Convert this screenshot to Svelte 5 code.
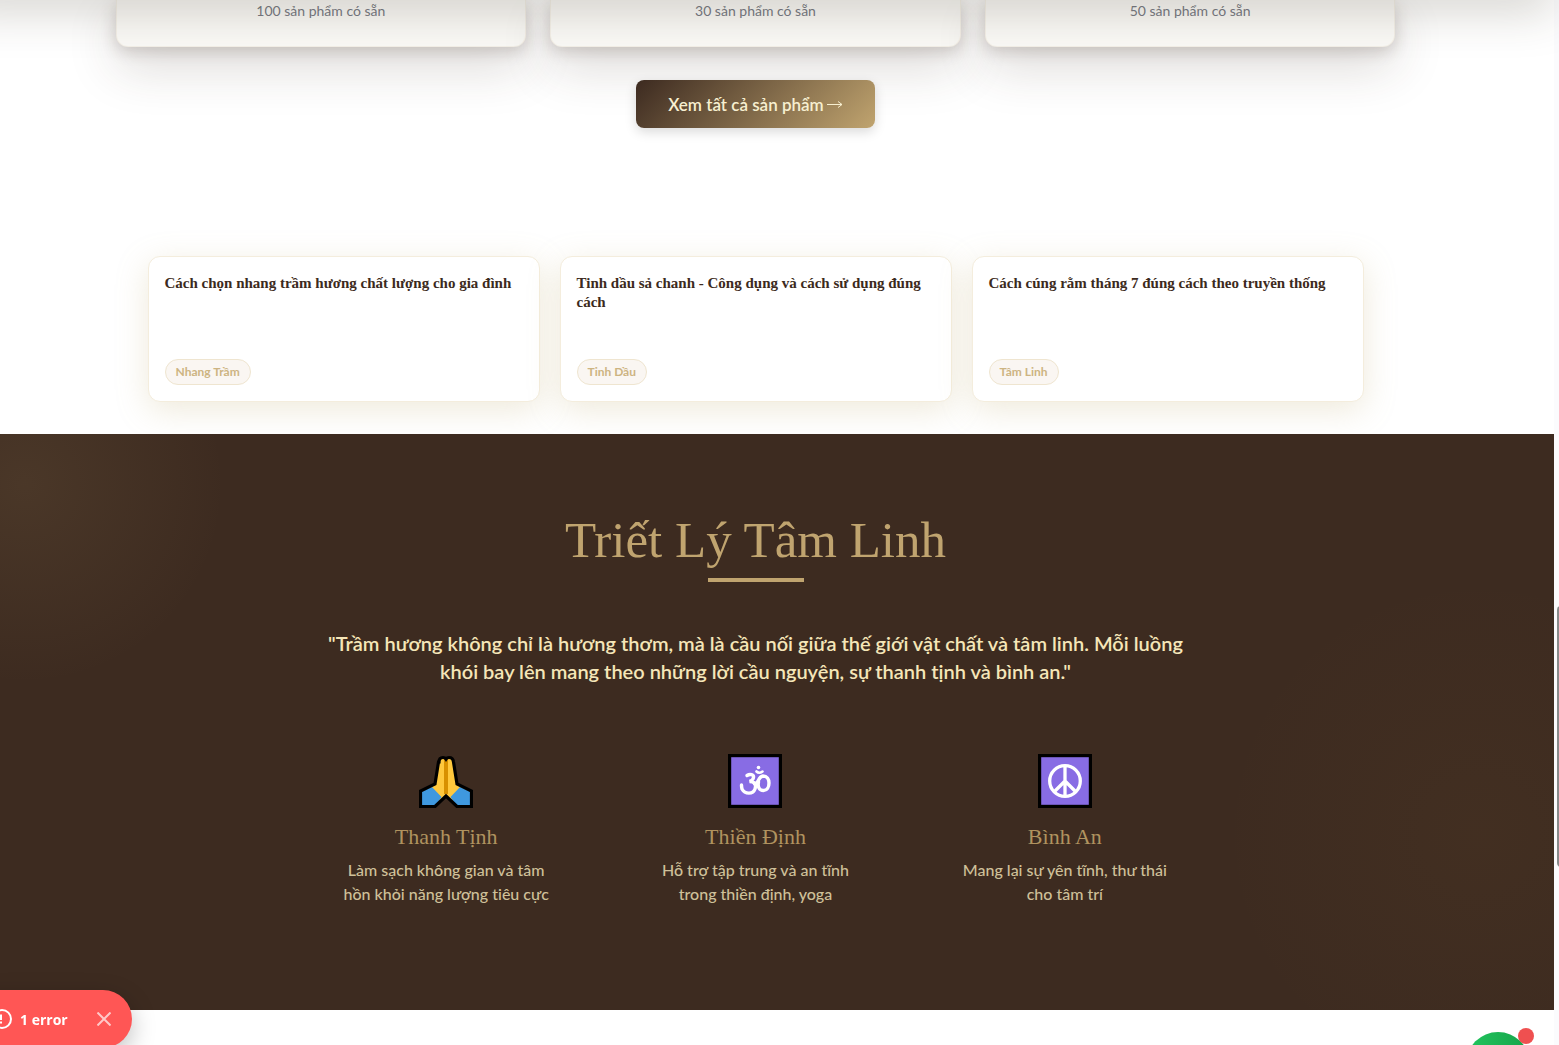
<script>
  const stock = ['100 sản phẩm có sẵn', '30 sản phẩm có sẵn', '50 sản phẩm có sẵn'];
  const posts = [
    { title: 'Cách chọn nhang trầm hương chất lượng cho gia đình', tag: 'Nhang Trầm' },
    { title: 'Tinh dầu sả chanh - Công dụng và cách sử dụng đúng cách', tag: 'Tinh Dầu' },
    { title: 'Cách cúng rằm tháng 7 đúng cách theo truyền thống', tag: 'Tâm Linh' }
  ];
  const values = [
    { icon: 'hands', title: 'Thanh Tịnh', lines: ['Làm sạch không gian và tâm', 'hồn khỏi năng lượng tiêu cực'] },
    { icon: 'om', title: 'Thiền Định', lines: ['Hỗ trợ tập trung và an tĩnh', 'trong thiền định, yoga'] },
    { icon: 'peace', title: 'Bình An', lines: ['Mang lại sự yên tĩnh, thư thái', 'cho tâm trí'] }
  ];
  let showError = $state(true);
</script>

<div class="page">
  <div class="content">
    <div class="nav-shadow"></div>
    <section class="products">
      <div class="stock-grid">
        {#each stock as s}
          <article class="stock-card"><p>{s}</p></article>
        {/each}
      </div>
      <a class="cta" href="#products">Xem tất cả sản phẩm <svg width="16" height="10" viewBox="0 0 16 10" fill="none" stroke="currentColor" aria-hidden="true"><path d="M0 5.500H15M11 2.500L15 5.500L11 8.500" /></svg></a>
    </section>

    <section class="posts">
      <div class="post-grid">
        {#each posts as post}
          <article class="post">
            <h3>{post.title}</h3>
            <span class="tag">{post.tag}</span>
          </article>
        {/each}
      </div>
    </section>

    <section class="philosophy">
      <h2>Triết Lý Tâm Linh</h2>
      <div class="rule"></div>
      <blockquote>"Trầm hương không chỉ là hương thơm, mà là cầu nối giữa thế giới vật chất và tâm linh. Mỗi luồng<br />khói bay lên mang theo những lời cầu nguyện, sự thanh tịnh và bình an."</blockquote>
      <div class="values">
        {#each values as v}
          <div class="value">
            <svg class="emoji" viewBox="0 0 54 54" aria-hidden="true">
              {#if v.icon === 'hands'}
                <path d="M20 8Q20 3.500 24 3.500Q26 3.500 27 4.500Q28 3.500 30 3.500Q34 3.500 34 8L38 30L52.500 37V52.500H38L27 42L16 52.500H1.500V37L16 30Z" fill="#ffc83d" />
                <path d="M1.500 38L13 33L22.500 43L16 52.500H1.500ZM52.500 38L41 33L31.500 43L38 52.500H52.500Z" fill="#3f98df" />
                <path d="M27 4V40" stroke="#d89000" stroke-width="4" />
                <path d="M20 8Q20 3.500 24 3.500Q26 3.500 27 5Q28 3.500 30 3.500Q34 3.500 34.500 8L38 30L52.500 37V52.500H38L27 42L16 52.500H1.500V37L16 30L19.500 8Z" fill="none" stroke="#000" stroke-width="3.200" />
              {:else}
                <rect x="1.600" y="1.600" width="50.800" height="50.800" fill="#886ce4" stroke="#000" stroke-width="3.200" />
                {#if v.icon === 'om'}
                  <g fill="none" stroke="#fff" stroke-width="3.400" stroke-linecap="round">
                    <path d="M19 21.500C22 19.500 26 20.500 25.500 23.500Q25 26.500 21.500 27.500C27 27.500 28.500 31 27 35C25 40.500 17 40.500 14 35Q13.500 33 13.500 31" />
                    <path d="M26.500 29.500C31 30.500 29.500 22.500 35 22C39 22 41 25 41 29C41 33 39 36.500 35.500 36.500C31 36.500 29.500 32.500 30.500 28" />
                    <path d="M28.500 17.500Q31 20 34.500 17.500" stroke-width="2.600" />
                  </g>
                  <circle cx="30.500" cy="13.500" r="1.800" fill="#fff" />
                {:else}
                  <g fill="none" stroke="#fff" stroke-width="3.300">
                    <circle cx="27" cy="27" r="15.300" />
                    <path d="M27 12V42M27 27L16.500 37.500M27 27L37.500 37.500" />
                  </g>
                {/if}
              {/if}
            </svg>
            <h3>{v.title}</h3>
            <p>{v.lines[0]}<br />{v.lines[1]}</p>
          </div>
        {/each}
      </div>
    </section>
  </div>
  <div class="gutter"><div class="thumb"></div></div>
</div>

{#if showError}
  <div class="toast" role="alert">
    <svg width="20" height="20" viewBox="0 0 20 20" fill="none" stroke="#fff" stroke-width="2" aria-hidden="true"><circle cx="10" cy="10" r="9" /><path d="M9 5.500V11M9 12.500V14.500" /></svg>
    <span>1 error</span>
    <button aria-label="Close" onclick={() => (showError = false)}>
      <svg width="14" height="14" viewBox="0 0 14 14" stroke="currentColor" stroke-width="2" aria-hidden="true"><path d="M0.500 0.500L13.500 13.500M13.500 0.500L0.500 13.500" /></svg>
    </button>
  </div>
{/if}
<button class="chat" aria-label="Chat"><span class="dot"></span></button>

<style>
  :global(body) {
    background: #fff;
    overflow: hidden;
    font-family: Lato, "Open Sans", sans-serif;
    font-variant-ligatures: none;
  }
  h2, h3, p, blockquote { margin: 0; }
  h2, h3 { font-family: "Liberation Serif", serif; }
  .page { display: flex; min-height: 100vh; }
  .content { flex: 1; min-width: 0; position: relative; }
  .gutter { width: 5px; background: #fbfbfd; position: relative; }
  .thumb {
    position: absolute;
    top: 58%;
    left: 3px;
    width: 8px;
    height: 25%;
    border-radius: 4px;
    background: #888b8b;
  }
  .nav-shadow {
    position: absolute;
    z-index: 1;
    top: -40px;
    left: -43px;
    right: 0;
    height: 40px;
    box-shadow: 0 8px 48px rgba(60, 50, 32, 0.25);
  }
  .products {
    display: flex;
    flex-direction: column;
    align-items: center;
    padding: 0 43px 128px 0;
  }
  .stock-grid {
    display: grid;
    grid-template-columns: repeat(3, 1fr);
    gap: 24px;
    width: 100%;
    max-width: 1280px;
  }
  .stock-card {
    box-sizing: border-box;
    height: 47px;
    padding: 1px 24px 0;
    text-align: center;
    border-radius: 0 0 12px 12px;
    border: 1px solid rgba(192, 164, 111, 0.1);
    border-top: 0;
    background: #faf9f6;
    box-shadow: 0 4px 16px rgba(60, 42, 32, 0.2), 0 20px 50px rgba(60, 42, 32, 0.18);
  }
  .stock-card p { font-size: 14px; line-height: 20px; color: #777983; }
  .cta {
    box-sizing: border-box;
    margin-top: 33px;
    height: 48px;
    padding: 0 32px;
    display: flex;
    align-items: center;
    gap: 3px;
    border-radius: 8px;
    background: linear-gradient(135deg, #3c2a20, #c0a46f);
    box-shadow: 0 4px 12px rgba(0, 0, 0, 0.15);
    color: #f7efd0;
    font-size: 17px;
    font-weight: 600;
    text-decoration: none;
  }
  .posts {
    display: flex;
    justify-content: center;
    padding: 0 43px 32px 0;
  }
  .post-grid {
    display: grid;
    grid-template-columns: repeat(3, 1fr);
    gap: 20px;
    width: 100%;
    max-width: 1216px;
  }
  .post {
    box-sizing: border-box;
    min-height: 146px;
    padding: 17px 16px 16px;
    display: flex;
    flex-direction: column;
    justify-content: space-between;
    align-items: flex-start;
    border: 1px solid #f4eddd;
    border-radius: 12px;
    background: #fff;
    box-shadow: 0 8px 32px rgba(192, 170, 111, 0.25);
  }
  .post h3 { font-size: 15px; line-height: 19px; color: #3c2a20; }
  .tag {
    padding: 0 10px;
    font-size: 12px;
    line-height: 24px;
    font-weight: 700;
    color: #cdb482;
    background: #faf6f2;
    border: 1px solid #efe5d0;
    border-radius: 13px;
  }
  .philosophy {
    position: relative;
    box-sizing: border-box;
    min-height: 576px;
    padding: 72px 43px 96px 0;
    display: flex;
    flex-direction: column;
    align-items: center;
    text-align: center;
    background:
      radial-gradient(circle at 25px 50px, rgba(192, 164, 111, 0.1), transparent 200px),
      radial-gradient(circle at calc(100% - 75px) 400px, rgba(192, 140, 60, 0.04), transparent 260px),
      #3d2b20;
  }
  h2 { font-size: 51px; line-height: 68px; font-weight: 400; color: #c0a46f; }
  .rule { width: 96px; height: 4px; margin-top: 4px; background: #c0a46f; }
  blockquote { margin-top: 47px; font-size: 20px; line-height: 28px; color: #f5e6b8; font-weight: 600; }
  .values {
    display: grid;
    grid-template-columns: repeat(3, 1fr);
    gap: 32px;
    width: 100%;
    max-width: 896px;
    margin-top: 69px;
  }
  .value { display: flex; flex-direction: column; align-items: center; }
  .emoji { width: 54px; height: 54px; }
  .value h3 { margin-top: 15px; font-size: 22px; line-height: 28px; font-weight: 400; color: #b0935f; }
  .value p { margin-top: 7px; font-size: 16px; line-height: 24px; font-weight: 500; color: #cfc099; }
  .toast {
    position: fixed;
    z-index: 3;
    left: -40px;
    bottom: -3px;
    box-sizing: border-box;
    width: 172px;
    height: 58px;
    padding: 0 21px 0 32px;
    display: flex;
    align-items: center;
    gap: 8px;
    border-radius: 29px;
    background: #ff5655;
    color: #fff;
    font: 700 14px "Open Sans", sans-serif;
    box-shadow: 0 8px 24px rgba(0, 0, 0, 0.25);
  }
  .toast button {
    margin-left: auto;
    padding: 0;
    display: flex;
    border: 0;
    background: none;
    color: #ffc8c8;
  }
  .chat {
    position: fixed;
    z-index: 3;
    right: 29px;
    bottom: -51px;
    width: 64px;
    height: 64px;
    padding: 0;
    border: 0;
    border-radius: 50%;
    background: linear-gradient(90deg, #22c55e, #16a34a);
  }
  .dot {
    position: absolute;
    top: -4px;
    right: -4px;
    width: 16px;
    height: 16px;
    border-radius: 50%;
    background: #ef5050;
  }
</style>
